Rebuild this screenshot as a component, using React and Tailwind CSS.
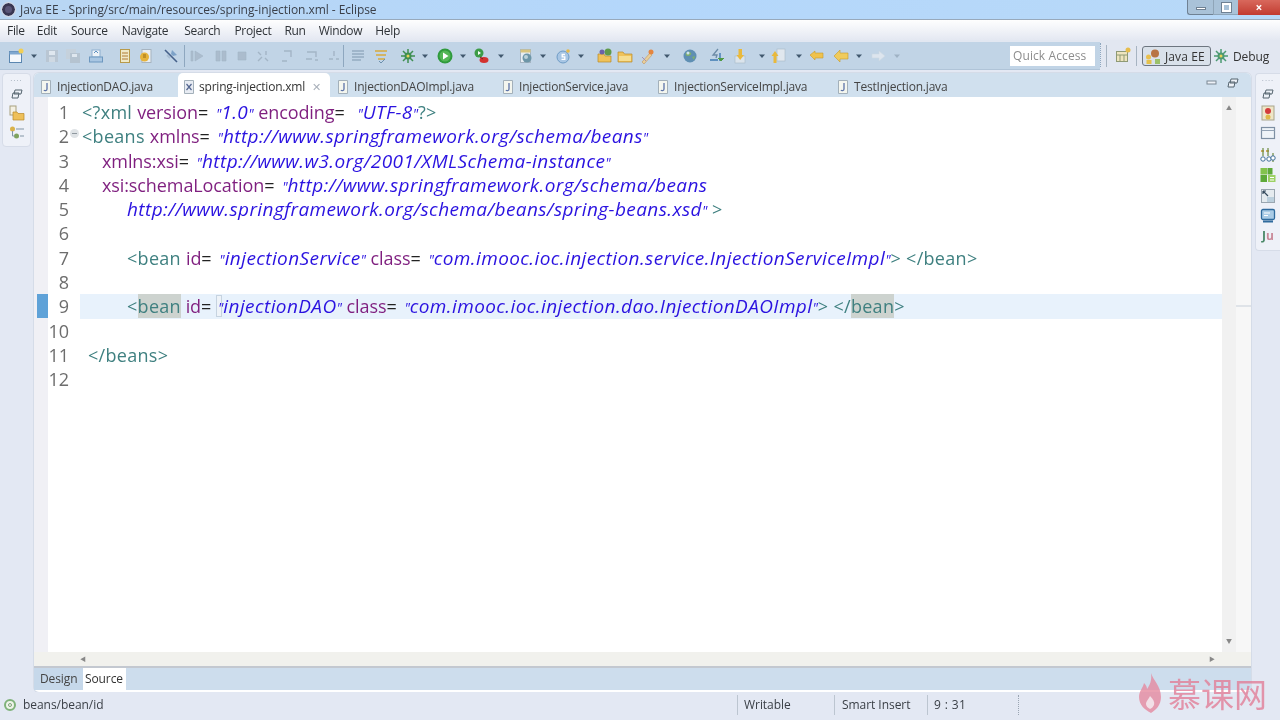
import React from "react";

const S = ({ children, className = "" }) => (
  <svg viewBox="0 0 16 16" className={"w-4 h-4 shrink-0 " + className}>{children}</svg>
);

const NewIcon = () => (<S><rect x="1.5" y="3.5" width="12" height="11" fill="#f4f8fc" stroke="#5a86b0" /><rect x="1.5" y="3.5" width="12" height="3" fill="#7fa8d0" /><circle cx="13" cy="3" r="2.5" fill="#f2cf55" /></S>);
const SaveIcon = ({ c = "#b9c6d3" }) => (<S><rect x="2" y="2" width="12" height="12" fill={c} /><rect x="5" y="3" width="6" height="4" fill="#dfe7ef" /><rect x="5" y="9" width="6" height="5" fill="#cfd9e3" /></S>);
const SaveAllIcon = () => (<S><rect x="1" y="1" width="10" height="10" fill="#c5d1dc" /><rect x="5" y="5" width="10" height="10" fill="#b5c3d0" /><rect x="7" y="6" width="5" height="3" fill="#dfe7ef" /></S>);
const PrintIcon = () => (<S><rect x="4" y="2" width="8" height="7" fill="#eef3f8" stroke="#8fb0d0" /><rect x="1.5" y="9" width="13" height="5" fill="#a9c6e2" stroke="#6d97bf" /><path d="M6 5l2-2 2 2" stroke="#5b8fc0" fill="none" /></S>);
const ListIcon = () => (<S><rect x="3.5" y="1.5" width="9" height="13" fill="#efe9c8" stroke="#b89a4a" /><path d="M5 5h6M5 8h6M5 11h6" stroke="#b07a35" /></S>);
const NoteIcon = () => (<S><rect x="4" y="1.5" width="9" height="13" fill="#e9edf2" stroke="#a7b4c0" /><circle cx="6.5" cy="9" r="4.5" fill="#e6b33c" /><path d="M5 9h3M5 7h3" stroke="#9a6c12" /></S>);
const PinIcon = () => (<S><path d="M2 2l12 12" stroke="#45608a" strokeWidth="1.6" /><path d="M9 2l5 5-4 1-2-2z" fill="#7da2c8" /><path d="M4 7l3 3" stroke="#a8bdd2" strokeWidth="2" /></S>);
const Sep = () => <div className="h-[22px] w-px bg-[#8ea7bf]" />;
const Dis = ({ d }) => (<S><path d={d} fill="#abbccd" stroke="#a3b5c6" strokeWidth="0.6" /></S>);
const DisLine = ({ d }) => (<S><path d={d} fill="none" stroke="#a3b5c6" strokeWidth="1.4" /></S>);
const Lines = () => (<S><path d="M2 3h12M2 6h12M2 9h12M2 12h9" stroke="#7f97ae" fill="none" /></S>);
const Marks = () => (<S><path d="M2 3h12M3 7h10M5 11h7" stroke="#d8a93c" strokeWidth="1.6" fill="none" /><path d="M6 13l2 2 4-4" stroke="#6c90ad" fill="none" /></S>);
const Gear = ({ c = "#3f8f52" }) => (<S><circle cx="8" cy="8" r="3.5" fill={c} /><path d="M8 1v14M1 8h14M3 3l10 10M13 3L3 13" stroke={c} strokeWidth="1.5" /><circle cx="8" cy="8" r="1.5" fill="#e7d35a" /></S>);
const Run = () => (<S><circle cx="8" cy="8" r="7.5" fill="#2f9a3c" /><circle cx="8" cy="8" r="5.5" fill="#54b756" /><path d="M6 4.5l5.5 3.5L6 11.5z" fill="#fff" /></S>);
const RunDebug = () => (<S><circle cx="6" cy="5" r="4.5" fill="#3d9c47" /><path d="M5 3l3 2-3 2z" fill="#fff" /><ellipse cx="11" cy="12" rx="4.5" ry="3" fill="#d3322f" /><path d="M7 9l3 2" stroke="#7b2020" /></S>);
const Server = () => (<S><rect x="2.5" y="1.5" width="10" height="13" fill="#e8eef3" stroke="#a4b4c2" /><rect x="2.5" y="1.5" width="10" height="3" fill="#d9c57e" /><circle cx="9" cy="10" r="4.5" fill="#6d96a8" /><circle cx="8" cy="9" r="2" fill="#bcd2da" /></S>);
const SIcon = () => (<S><circle cx="8" cy="9" r="6" fill="#a8c6e4" stroke="#6f9cc6" /><path d="M10 6.5H7.2v2.4H9.8v2.5H6.5" fill="none" stroke="#fff" strokeWidth="1.3" /><circle cx="13" cy="3" r="1.8" fill="#e5b94a" /></S>);
const Folder = ({ c = "#efc25a" }) => (<S><path d="M1 4h5l1.5 2H15v8H1z" fill={c} stroke="#b98a2a" strokeWidth="0.7" /><path d="M2 8h12v5H2z" fill="#f6dd90" /></S>);
const FolderG = () => (<S><path d="M1 6h6l1 2h6v6H1z" fill="#efc25a" stroke="#b98a2a" strokeWidth="0.7" /><circle cx="11" cy="4" r="3.5" fill="#5f9a4a" /><circle cx="5" cy="4" r="2.5" fill="#6a62a8" /></S>);
const Brush = () => (<S><path d="M3 14l8-9 2 2-8 9z" fill="#e9cf9a" stroke="#bf9460" strokeWidth="0.6" /><circle cx="12" cy="4" r="2.5" fill="#e5853f" /><path d="M3 9l4 4" stroke="#a88fb5" /></S>);
const Globe = () => (<S><circle cx="8" cy="8" r="6.5" fill="#5f8fb3" /><path d="M4 5c2-2 4-1 5 0s-1 3-3 3-3-1-2-3zM10 9l3-1-1 4z" fill="#7fb06a" /><circle cx="6" cy="5" r="1.5" fill="#cfe3f0" /></S>);
const Sync = () => (<S><path d="M9 1l-5 6h4l-1 3" fill="none" stroke="#6c8aa6" strokeWidth="1.3" /><path d="M1 12h8M11 5v8" stroke="#3f7bb2" strokeWidth="1.4" /><path d="M9 10l3 3 3-3" fill="#4f9a45" stroke="#4f9a45" /></S>);
const Down = () => (<S><rect x="3" y="8" width="10" height="7" fill="#dbe4ec" stroke="#a9b9c7" strokeWidth="0.6" /><rect x="6.5" y="1" width="3.5" height="7" fill="#e9b93c" /><path d="M4.5 7h7.5L8.2 12z" fill="#e9b93c" /></S>);
const Up = () => (<S><rect x="7" y="1" width="8" height="12" fill="#e0e7ee" stroke="#a9b9c7" strokeWidth="0.6" /><path d="M5 3L1.5 8h7zM3.5 8h3v7h-3z" fill="#e9b93c" /></S>);
const BackY = () => (<S><path d="M1 7l5-4v2h8v5H6v2z" fill="#efc24d" stroke="#c79a2c" strokeWidth="0.6" /></S>);
const BackY2 = () => (<S><path d="M1 8l6-6v3h8v6H7v3z" fill="#f0cb5c" stroke="#c79a2c" strokeWidth="0.6" /></S>);
const Fwd = () => (<S><path d="M15 8l-6-5v3H2v4h7v3z" fill="#dde5ee" stroke="#cfd8e2" strokeWidth="0.6" /></S>);
const Arrow = ({ c = "#41586e" }) => (
  <svg viewBox="0 0 8 16" className="w-2 h-4 shrink-0"><path d="M1 6.5h6L4 10z" fill={c} /></svg>
);
const JavaFile = () => (
  <svg viewBox="0 0 10 14" className="w-[10px] h-[14px] shrink-0"><path d="M.5 .5h9v13h-9z" fill="#f4f6ef" stroke="#a3b0ba" /><path d="M6 3v6c0 2-2.500 2-3 1" fill="none" stroke="#5d73a8" strokeWidth="1.3" /></svg>
);
const XmlFile = () => (
  <svg viewBox="0 0 10 14" className="w-[10px] h-[14px] shrink-0"><path d="M.5 .5h9v13h-9z" fill="#e8ecf3" stroke="#a3b0ba" /><path d="M2.500 4l5 6M7.500 4l-5 6" stroke="#53668f" strokeWidth="1.2" /></svg>
);
const RestoreIcon = () => (
  <svg viewBox="0 0 12 10" className="w-3 h-[10px] shrink-0"><path d="M4 1h7l-1 4H3zM2 4h6L7 9H1z" fill="#eef2f8" stroke="#55646f" /></svg>
);
const MinIcon = () => (
  <svg viewBox="0 0 12 6" className="w-3 h-[6px] shrink-0"><rect x="1" y="1" width="9" height="3" fill="#eef2f8" stroke="#7a8793" /></svg>
);
const FolderNav = () => (<S><rect x="1" y="1" width="6" height="9" fill="#f4f1e4" stroke="#a8a17f" /><path d="M4 7h4l1 1.500h6V15H4z" fill="#eec05a" stroke="#b98a2a" strokeWidth="0.7" /></S>);
const Hier = () => (<S><circle cx="3.5" cy="4" r="2.500" fill="#d9b24a" /><circle cx="7.500" cy="11" r="2.500" fill="#7fa35e" /><path d="M3.500 6v5h2M7 4h8M11 11h4" stroke="#8295a5" fill="none" /></S>);
const Persp = () => (<S><rect x="1.500" y="4.500" width="11" height="10" fill="#eee5bf" stroke="#8f9a75" /><path d="M1.500 8h11M5 8v6.500M9 8v6.500" stroke="#8f9a75" /><circle cx="13" cy="3" r="2.500" fill="#e6bd4c" /></S>);
const JavaEE = () => (<S><circle cx="10" cy="4.500" r="4" fill="#b87445" /><circle cx="3.500" cy="8" r="2.500" fill="#eac04d" /><rect x="1.500" y="11" width="5" height="4" fill="#e5c14a" /><rect x="10" y="10" width="5" height="5" fill="#9cc169" /></S>);
const Task = () => (<S><rect x="2" y="1" width="12" height="14" fill="#efe6c8" stroke="#a8a58c" /><circle cx="8" cy="6" r="3" fill="#d43c3c" /><circle cx="8" cy="12" r="2.500" fill="#e0b94a" /></S>);
const WinIcon = () => (<S><rect x="1.500" y="2.500" width="13" height="11" fill="#eef3f8" stroke="#7d8fa3" strokeWidth="1.200" /><path d="M1.500 5.500h13" stroke="#93a3b5" /></S>);
const Tuning = () => (<S><path d="M1 4h3M6 4h3" stroke="#c8942e" strokeWidth="1.500" /><path d="M3 1v8M8 1v8M13 6v9" stroke="#6d8a3f" strokeWidth="1.200" /><circle cx="3" cy="12" r="2.200" fill="#fff" stroke="#3f6f9a" /><circle cx="9" cy="12" r="2.200" fill="#fff" stroke="#3f6f9a" /><circle cx="13" cy="11" r="2.200" fill="#fff" stroke="#3f6f9a" /></S>);
const GreenBoxes = () => (<S><rect x="0.500" y="1" width="6.500" height="6.500" fill="#83c24d" /><rect x="7.500" y="1" width="5" height="6.500" fill="#5ea93a" /><rect x="0.500" y="8" width="6.500" height="7" fill="#5ea93a" /><rect x="8" y="8" width="7.500" height="7" fill="#9cd164" /><path d="M10 10.500h4M10 13h4" stroke="#fff" /></S>);
const Img = () => (<S><rect x="1.500" y="1.500" width="13" height="13" fill="#e5ebef" stroke="#9aa6b0" /><path d="M3 3l5 5M3 3h3M3 3v3" stroke="#34495c" strokeWidth="1.200" fill="none" /><rect x="7" y="9" width="7" height="5" fill="#bcd0dd" /></S>);
const Monitor = () => (<S><rect x="1.500" y="1.500" width="13" height="10" rx="1.500" fill="#a9cbe6" stroke="#2f6a9d" strokeWidth="1.300" /><path d="M4 5h6M4 7.500h4" stroke="#fff" /><path d="M3 13.500h10" stroke="#2f6a9d" strokeWidth="2" /></S>);

const tools = [
  ["ml-[8px]", <NewIcon />], ["ml-[6px]", <Arrow />], ["ml-[6px]", <SaveIcon />], ["ml-[5px]", <SaveAllIcon />],
  ["ml-[7px]", <PrintIcon />], ["ml-[13px]", <ListIcon />], ["ml-[5px]", <NoteIcon />], ["ml-[9px]", <PinIcon />],
  ["ml-[5px]", <Sep />], ["ml-[4px]", <Dis d="M2 3h2v10H2zM6 3l8 5-8 5z" />], ["ml-[8px]", <Dis d="M3 3h4v10H3zM9 3h4v10H9z" />],
  ["ml-[5px]", <Dis d="M4 4h8v8H4z" />], ["ml-[5px]", <DisLine d="M3 4l3 3M11 3v4M3 13l4-4M10 10l3 3" />],
  ["ml-[9px]", <DisLine d="M4 3h7v6M2 13h5" />], ["ml-[8px]", <DisLine d="M3 4h9v5M2 11h6M11 12h3" />],
  ["ml-[5px]", <DisLine d="M4 11h4M11 11h3M9 3v5" />], ["ml-[2px]", <Sep />], ["ml-[6px]", <Lines />], ["ml-[7px]", <Marks />],
  ["ml-[11px]", <Gear />], ["ml-[5px]", <Arrow />], ["ml-[8px]", <Run />], ["ml-[6px]", <Arrow />], ["ml-[6px]", <RunDebug />],
  ["ml-[8px]", <Arrow />], ["ml-[13px]", <Server />], ["ml-[5px]", <Arrow />], ["ml-[8px]", <SIcon />], ["ml-[6px]", <Arrow />],
  ["ml-[12px]", <FolderG />], ["ml-[4px]", <Folder />], ["ml-[6px]", <Brush />], ["ml-[8px]", <Arrow />], ["ml-[11px]", <Globe />],
  ["ml-[11px]", <Sync />], ["ml-[7px]", <Down />], ["ml-[10px]", <Arrow />], ["ml-[4px]", <Up />], ["ml-[9px]", <Arrow />],
  ["ml-[6px]", <BackY />], ["ml-[8px]", <BackY2 />], ["ml-[6px]", <Arrow />], ["ml-[7px]", <Fwd />], ["ml-[7px]", <Arrow c="#9fb2c4" />],
];

const tabs = [
  { t: "InjectionDAO.java", cls: "pl-[7px] w-[144px]" },
  { t: "spring-injection.xml", cls: "pl-[6px] w-[152px] bg-white rounded-t-[5px]", active: true },
  { t: "InjectionDAOImpl.java", cls: "pl-[8px] w-[165px]" },
  { t: "InjectionService.java", cls: "pl-[8px] w-[155px]" },
  { t: "InjectionServiceImpl.java", cls: "pl-[8px] w-[180px]" },
  { t: "TestInjection.java", cls: "pl-[8px] w-[120px]" },
];

const T = ({ children }) => <span className="text-[#3f8080] tracking-[0.3px]">{children}</span>;
const A = ({ children }) => <span className="text-[#7f1f7f] tracking-[-0.1px]">{children}</span>;
const Q = () => <span className="text-[14px] tracking-[0px]">"</span>;
const V = ({ children, open = true, close = true }) => (
  <span className="text-[#2a12e0] italic text-[19px] tracking-[0.4px]">
    {open && <Q />}
    {children}
    {close && <Q />}
  </span>
);
const E = () => <span className="text-[#222] tracking-[1.5px]">{"= "}</span>;

const Line = ({ children, cls = "" }) => (
  <div className={"h-[24.3px] leading-[24.3px] whitespace-pre " + cls}>{children}</div>
);

const nums = [1, 2, 3, 4, 5, 6, 7, 8, 9, 10, 11, 12];

export default function App() {
  return (
    <div className="relative w-[1280px] h-[720px] overflow-hidden flex flex-col bg-[#e3e8f3] text-[#333] blur-[0.35px] font-['Open_Sans','Noto_Sans_CJK_SC',sans-serif]">
      {/* title bar */}
      <div className="h-[20px] shrink-0 flex items-start bg-gradient-to-r from-[#b9d6f3] via-[#b4d7fb] to-[#b8d9f8] border-b border-[#98a9bb]">
        <div className="ml-[2px] mt-[3px] w-[13px] h-[13px] rounded-full bg-[#5a5678] border-[3px] border-[#3a3752] outline outline-1 outline-[#d8d8e0]" />
        <span className="ml-[5px] text-[12px] leading-[20px] tracking-[-0.06px] text-[#3a3f49]">Java EE - Spring/src/main/resources/spring-injection.xml - Eclipse</span>
        <div className="ml-auto flex h-[15px] items-stretch">
          <div className="w-[26px] bg-[#a9c2d8] border-l border-b border-[#6f8193] rounded-bl-[3px] flex items-center justify-center">
            <div className="w-[10px] h-[3px] mt-[3px] bg-white border border-[#6f8193]" />
          </div>
          <div className="w-[25px] bg-[#a9c2d8] border-b border-l border-[#8fa5b8] flex items-center justify-center">
            <div className="w-[9px] h-[9px] border-2 border-white outline outline-1 outline-[#6f8193]" />
          </div>
          <div className="w-[42px] bg-gradient-to-b from-[#d8685c] to-[#c23a30] flex items-center justify-center text-white text-[12px] font-bold leading-[15px]">×</div>
        </div>
      </div>

      {/* menu bar */}
      <div className="h-[20px] pt-[1px] shrink-0 flex items-center bg-gradient-to-b from-[#fefefe] to-[#e4e8f2] text-[12px] text-[#2f3338] tracking-[-0.3px]">
        <span className="ml-[7px]">File</span>
        <span className="ml-[12px]">Edit</span>
        <span className="ml-[14px]">Source</span>
        <span className="ml-[14px]">Navigate</span>
        <span className="ml-[16px]">Search</span>
        <span className="ml-[14px]">Project</span>
        <span className="ml-[13px]">Run</span>
        <span className="ml-[13px]">Window</span>
        <span className="ml-[13px]">Help</span>
      </div>

      {/* toolbar */}
      <div className="h-[30px] shrink-0 flex bg-[#e2e7f1]">
        <div className="w-[1100px] mt-[2px] flex items-center bg-[#c1d4e6] border-b border-[#b0c4d8] h-[28px] relative">
          {tools.map(([ml, icon], i) => (
            <div key={i} className={ml + " shrink-0 flex items-center"}>{icon}</div>
          ))}
          <div className="ml-auto mr-[5px] w-[85px] h-[20px] bg-white flex items-center pl-[3px] text-[12px] text-[#8d8d8d] tracking-[0.1px]">Quick Access</div>
        </div>
        <div className="h-[24px] mt-[3px] border-l border-dotted border-[#8ea7bf]" />
        <div className="ml-[5px] mt-[5px] h-[22px] w-px bg-[#a7b4c2]" />
        <div className="ml-[8px] mt-[7px]"><Persp /></div>
        <div className="ml-[5px] mt-[6px] h-[20px] w-px bg-[#a7b4c2]" />
        <div className="ml-[5px] mt-[6px] pt-[1px] w-[69px] h-[20px] border border-[#6d7680] rounded-[3px] bg-[#d9e1ea] flex items-center pl-[2px] text-[12px] text-[#333] tracking-[0.1px]">
          <JavaEE /><span className="ml-[4px]">Java EE</span>
        </div>
        <div className="ml-[2px] mt-[8px]"><Gear c="#4c9a72" /></div>
        <span className="ml-[4px] mt-[7px] text-[12px] leading-[20px] text-[#333] tracking-[-0.1px]">Debug</span>
      </div>

      {/* main */}
      <div className="flex-1 flex min-h-0">
        {/* left trim */}
        <div className="w-[34px] shrink-0 pt-[3px] pl-[2px]">
          <div className="w-[29px] h-[74px] rounded-[4px] bg-[#eef1f8] border border-[#d6dce8] flex flex-col items-center">
            <div className="mt-[3px] text-[8px] leading-[6px] tracking-[1px] text-[#93a0ad]">····</div>
            <div className="mt-[6px]"><RestoreIcon /></div>
            <div className="mt-[6px]"><FolderNav /></div>
            <div className="mt-[4px]"><Hier /></div>
          </div>
        </div>

        {/* editor folder */}
        <div className="w-[1217px] shrink-0 mt-[3px] flex flex-col rounded-[5px] bg-white border-b-2 border-white shadow-[0_0_0_1px_#d5dce8]">
          <div className="h-[24px] pt-[2px] shrink-0 flex items-stretch bg-[#d0e0ee] rounded-t-[5px] text-[12px] text-[#444] tracking-[-0.2px]">
            {tabs.map((tab) => (
              <div key={tab.t} className={"flex items-center shrink-0 -mt-[2px] pt-[3px] " + tab.cls}>
                {tab.active ? <XmlFile /> : <JavaFile />}
                <span className={tab.active ? "ml-[5px] text-[#333]" : "ml-[6px]"}>{tab.t}</span>
                {tab.active && <span className="ml-[7px] text-[11px] text-[#a9b0ba] leading-none">✕</span>}
              </div>
            ))}
            <div className="ml-auto mr-[12px] flex items-center gap-[9px] -mt-[6px]">
              <MinIcon /><RestoreIcon />
            </div>
          </div>

          <div className="flex-1 min-h-0 flex text-[18px]">
            {/* annotation strip */}
            <div className="w-[14px] shrink-0 bg-[#f0f0f5] flex flex-col">
              <div className="mt-[197px] ml-[3px] w-[11px] h-[24px] bg-[#5fa2d8]" />
            </div>
            {/* line numbers */}
            <div className="w-[32px] shrink-0 pt-[3px] text-right text-[#6d6d6d] relative">
              {nums.map((n) => (
                <div key={n} className="h-[24.3px] leading-[24.3px] pr-[11px]">{n}</div>
              ))}
              <div className="absolute left-[22px] top-[32px] w-[9px] h-[9px] rounded-full bg-[#dfe3e6] flex items-center justify-center">
                <div className="w-[5px] h-px bg-[#8e979e]" />
              </div>
            </div>
            {/* code */}
            <div className="flex-1 min-w-0 pt-[3px] relative">
              <Line cls="pl-[2px]"><T>{"<?xml "}</T><A>version</A><E /><V>1.0</V> <A>encoding</A><E /><span className="ml-[5px]"><V>UTF-8</V></span><T>{"?>"}</T></Line>
              <Line cls="pl-[2px]"><T>{"<beans "}</T><A>xmlns</A><E /><V>http://www.springframework.org/schema/beans</V></Line>
              <Line cls="pl-[22px]"><A>xmlns:xsi</A><E /><V>http://www.w3.org/2001/XMLSchema-instance</V></Line>
              <Line cls="pl-[22px]"><A>xsi:schemaLocation</A><E /><V close={false}>http://www.springframework.org/schema/beans</V></Line>
              <Line cls="pl-[47px]"><V open={false}>http://www.springframework.org/schema/beans/spring-beans.xsd</V> <T>{">"}</T></Line>
              <Line />
              <Line cls="pl-[47px]"><T>{"<bean "}</T><A>id</A><E /><V>injectionService</V> <A>class</A><E /><V>com.imooc.ioc.injection.service.InjectionServiceImpl</V><T>{"> </bean>"}</T></Line>
              <Line />
              <Line cls="pl-[47px] bg-[#e8f2fc]">
                <T>{"<"}</T><span className="bg-[#cdd3cf] text-[#3f8080] tracking-[0.3px]">bean</span> <A>id</A><E /><span className="inline-block h-[22px] align-top border border-[#c6d3e0] bg-[#eef3f8] w-[6px] -mr-[4px] -ml-[3px] mt-[1px]" /><V>injectionDAO</V> <A>class</A><E /><V>com.imooc.ioc.injection.dao.InjectionDAOImpl</V><T>{"> </"}</T><span className="bg-[#cdd3cf] text-[#3f8080] tracking-[0.3px]">bean</span><T>{">"}</T>
              </Line>
              <Line />
              <Line cls="pl-[8px]"><T>{"</beans>"}</T></Line>
              <Line />
            </div>
            {/* vertical scroll + overview */}
            <div className="w-[14px] shrink-0 bg-[#f1f1f1] flex flex-col items-center justify-between py-[8px] text-[6px] text-[#888] leading-none">
              <span>▲</span><span>▼</span>
            </div>
            <div className="w-[15px] shrink-0 bg-[#f7f7f7] flex flex-col">
              <div className="mt-[208px] h-[2px] bg-[#dfe3e8]" />
            </div>
          </div>

          {/* horizontal scroll */}
          <div className="h-[16px] shrink-0 flex items-center bg-[#f1f1ed] border-b-2 border-[#c3c8d0] pl-[46px] pr-[36px] text-[6px] text-[#888] leading-none">
            <span>◀</span><span className="ml-auto">▶</span>
          </div>

          {/* design/source */}
          <div className="h-[22px] shrink-0 flex bg-[#cddded] text-[12px] text-[#444]">
            <div className="pl-[6px] w-[49px] flex items-center bg-[#c6d8ea] tracking-[-0.1px]">Design</div>
            <div className="pl-[2px] w-[43px] flex items-center bg-white text-[#333] tracking-[-0.1px]">Source</div>
          </div>
        </div>

        {/* right trim */}
        <div className="flex-1 pt-[3px] pl-[4px]">
          <div className="h-[178px] rounded-l-[4px] bg-[#eef1f8] border border-r-0 border-[#d6dce8] flex flex-col items-center">
            <div className="mt-[3px] text-[8px] leading-[6px] tracking-[1px] text-[#93a0ad]">····</div>
            <div className="mt-[6px]"><RestoreIcon /></div>
            <div className="mt-[6px]"><Task /></div>
            <div className="mt-[4px]"><WinIcon /></div>
            <div className="mt-[6px]"><Tuning /></div>
            <div className="mt-[4px]"><GreenBoxes /></div>
            <div className="mt-[5px]"><Img /></div>
            <div className="mt-[4px]"><Monitor /></div>
            <div className="mt-[4px] text-[12px] leading-4 font-bold"><span className="text-[#4c8a6a]">J</span><span className="text-[#c98a9a]">u</span></div>
          </div>
        </div>
      </div>

      {/* status bar */}
      <div className="h-[28px] pb-[2px] shrink-0 flex items-center text-[12px] text-[#3a3f46] bg-[#e3e8f3] tracking-[-0.05px]">
        <div className="ml-[4px] w-[12px] h-[12px] rounded-full border-2 border-[#7fb27a] bg-[#eef3ea] flex items-center justify-center">
          <div className="w-[4px] h-[4px] rounded-full border border-[#7fa27a]" />
        </div>
        <span className="ml-[7px] w-[714px]">beans/bean/id</span>
        <div className="h-[20px] w-px bg-[#bcc5d0]" />
        <span className="ml-[6px] w-[90px]">Writable</span>
        <div className="h-[20px] w-px bg-[#bcc5d0]" />
        <span className="ml-[7px] w-[85px]">Smart Insert</span>
        <div className="h-[20px] w-px bg-[#bcc5d0]" />
        <span className="ml-[6px] w-[84px] tracking-[0.4px]">9 : 31</span>
        <div className="h-[20px] border-l border-dotted border-[#9aa5b2]" />
      </div>

      {/* watermark */}
      <div className="absolute left-[1138px] top-[672px] flex items-center opacity-80 pointer-events-none">
        <svg viewBox="0 0 24 42" className="w-[24px] h-[42px] shrink-0">
          <path d="M13 1c2 7 10 13 10 24 0 8-5 13-10 16C7 38 1 33 1 25c0-6 4-9 5-14 2 2 3 4 3 6 3-4 5-9 4-16z" fill="#e58aa0" />
          <path d="M12 24c3 3 5 6 4 9-1 2-2 3-4 4-2-1-4-3-4-5 0-3 3-5 4-8z" fill="#f6dfe5" />
        </svg>
        <span className="ml-[6px] text-[33px] leading-[42px] text-[#e27f98] font-normal whitespace-nowrap font-['Noto_Sans_CJK_SC',sans-serif]">慕课网</span>
      </div>
    </div>
  );
}
